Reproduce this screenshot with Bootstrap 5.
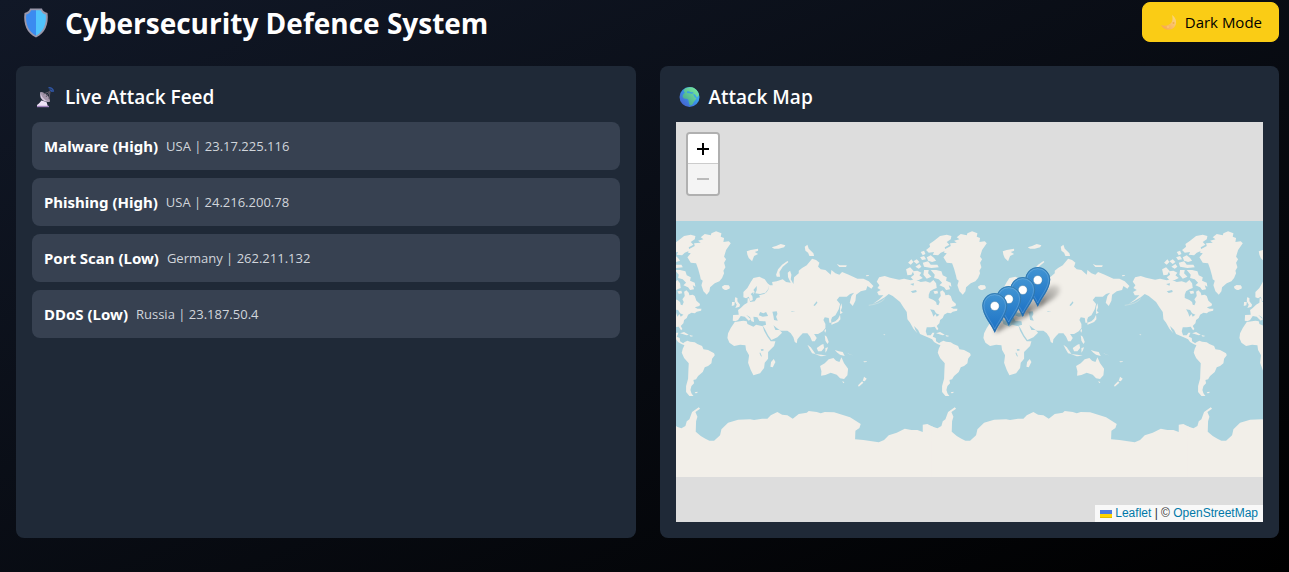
<!DOCTYPE html>
<html lang="en">
<head>
<meta charset="utf-8">
<meta name="viewport" content="width=device-width, initial-scale=1">
<title>Cybersecurity Defence System</title>
<link href="https://cdn.jsdelivr.net/npm/bootstrap@5.3.0/dist/css/bootstrap.min.css" rel="stylesheet">
<style>
  body {
    font-family: "Open Sans", "Noto Sans", sans-serif;
    color: #fff;
    background: linear-gradient(to bottom right, #111827, #000) no-repeat #000;
    min-height: 100vh;
    padding: 2px 10px 16px 16px;
  }
  .site-title { font-size: 28px; line-height: 40px; font-weight: 700; gap: 13px; padding: 2px 0 0 4px; height: 40px; }
  .btn-mode {
    --bs-btn-bg: #facc15; --bs-btn-color: #000; --bs-btn-border-color: #facc15;
    --bs-btn-hover-bg: #eab308; --bs-btn-hover-color: #000;
    font-size: 15px; line-height: 24px; border-radius: 8px; padding: 7px 16px; gap: 6px;
  }
  .panel { background: #1f2937; border-radius: 8px; padding: 16px; }
  .panel-title { font-size: 19px; line-height: 28px; font-weight: 600; margin-bottom: 12px; padding: 2px 0 0 3px; height: 28px; gap: 9px; }
  .feed-item { background: #374151; border-radius: 8px; padding: 12px; line-height: 24px; font-size: 15px; gap: 8px; }
  .feed-item + .feed-item { margin-top: 8px; }
  .feed-item strong { font-family: "Noto Sans", "Open Sans", sans-serif; }
  .feed-meta { font-size: 13px; color: #d1d5db; }
  .map-box { height: 400px; background: #ddd; }
  .map-zoom { top: 10px; left: 10px; border: 2px solid #b0b0b0; border-radius: 4px; }
  .map-zoom button { width: 30px; height: 30px; border: 0; padding: 0; background: #fff; color: #000; display: flex; align-items: center; justify-content: center; }
  .map-zoom button:first-child { border-bottom: 1px solid #ccc; border-radius: 2px 2px 0 0; }
  .map-zoom button:disabled { background: #f4f4f4; color: #bbb; border-radius: 0 0 2px 2px; }
  .map-credit { right: 0; bottom: 0; background: rgba(255,255,255,.8); color: #333; font: 12px/17px "Liberation Sans", Arial, sans-serif; padding: 0 5px; }
  .map-credit a { color: #0078a8; text-decoration: none; }
</style>
</head>
<body>
<header class="d-flex justify-content-between align-items-center mb-4">
  <h1 class="site-title d-flex align-items-center mb-0">
    <svg width="32" height="32" viewBox="0 0 32 32" aria-hidden="true">
      <path d="M10 1.500h12c.3 2 2.500 4 5.500 4.500C29 17 25 26.500 16 30.500 7 26.500 3 17 4.500 6 7.500 5.500 9.700 3.500 10 1.500z" fill="#9a97aa"/>
      <path d="M16 3.200h-4.800C10.500 5 8.700 7 6.200 7.500 5.300 17 8.500 24.800 16 28.700z" fill="#3b8bf0"/>
      <path d="M16 3.200h4.800C21.500 5 23.300 7 25.800 7.500 26.700 17 23.500 24.800 16 28.700z" fill="#50c4fd"/>
    </svg>
    <span>Cybersecurity Defence System</span>
  </h1>
  <button type="button" class="btn btn-mode d-flex align-items-center">
    <svg width="20" height="20" viewBox="0 0 20 20" aria-hidden="true">
      <defs><linearGradient id="moonFill" x1="0" y1="1" x2="1" y2="0"><stop offset="0" stop-color="#f7a04c"/><stop offset="1" stop-color="#fbdc82"/></linearGradient></defs>
      <path d="M13 3c4.500 3 5.500 9 2 12.500-3.800 3.700-10.500 2.800-13-2.500 4 1.500 8.500.5 10.500-2.500 1.300-2.300 1.300-5 .5-7.500z" fill="url(#moonFill)"/>
      <circle cx="14.500" cy="11" r="1" fill="#f0ad4a"/><circle cx="9" cy="15" r="1" fill="#fbc96d"/>
    </svg>
    <span>Dark Mode</span>
  </button>
</header>

<main class="row g-4">
  <section class="col-md-6">
    <div class="panel h-100">
      <h2 class="panel-title d-flex align-items-center">
        <svg width="21" height="22" viewBox="0 0 21 22" aria-hidden="true">
          <path d="M2 20.500v-1.500c2-1 3-3 4.500-4.500l5 1.500 1.500 4.500z" fill="#efe3f7"/>
          <path d="M2 19.800h12v1.400H2z" fill="#a184bd"/>
          <path d="M5.500 6c-1.500 6 2.500 11 9.500 9.500z" fill="#d8c8df"/>
          <path d="M5.500 6c4-.5 10 5 9.500 9.500-4 0-9-4-9.500-9.500z" fill="#a596ab"/>
          <path d="M8.500 8 15 5.500 14 13M15 5.500 11 11" fill="none" stroke="#625b69"/>
          <path d="M13.500 1.800c2.500-.5 4.800 1 5 4M14.500 4c1.500-.2 2.500.600 2.500 2" fill="none" stroke="#2f55a4" stroke-width="1.400"/>
        </svg>
        <span>Live Attack Feed</span>
      </h2>
      <ul class="list-unstyled mb-0">
        <li class="feed-item d-flex align-items-center"><strong>Malware (High)</strong><span class="feed-meta">USA | 23.17.225.116</span></li>
        <li class="feed-item d-flex align-items-center"><strong>Phishing (High)</strong><span class="feed-meta">USA | 24.216.200.78</span></li>
        <li class="feed-item d-flex align-items-center"><strong>Port Scan (Low)</strong><span class="feed-meta">Germany | 262.211.132</span></li>
        <li class="feed-item d-flex align-items-center"><strong>DDoS (Low)</strong><span class="feed-meta">Russia | 23.187.50.4</span></li>
      </ul>
    </div>
  </section>

  <section class="col-md-6">
    <div class="panel h-100">
      <h2 class="panel-title d-flex align-items-center">
        <svg width="21" height="22" viewBox="0 0 21 22" aria-hidden="true">
          <defs><linearGradient id="seaFill" x1="0" y1="1" x2="1" y2="0"><stop offset="0" stop-color="#4a55c8"/><stop offset=".5" stop-color="#3a8fe8"/><stop offset="1" stop-color="#3fc4fb"/></linearGradient>
          <linearGradient id="landFill" x1="0" y1="1" x2="1" y2="0"><stop offset="0" stop-color="#3f9b8c"/><stop offset="1" stop-color="#7df0a0"/></linearGradient></defs>
          <circle cx="10.500" cy="11" r="10" fill="url(#seaFill)"/>
          <path d="M5 3.500C8 .8 13 .5 16 2.700c2 1.400 3.600 4 4 6.300l-2 2.500-2-3-2-.5 2 3.500 1.500.5c-.5 2-2.500 3-3 4.500-.5 2-2 3-3.500 3-1-1.500-1-3-1.500-4.500 0-1.500-1-2-2-2.200-2 .2-3.500-.8-4-2.300C3.500 8.500 5 7.500 6 6.500 5 6 4.500 5 5 3.500z" fill="url(#landFill)"/>
          <path d="M8 5.500c1.500-.5 2.500 0 3.500.5 1 .4 2 0 3 .5l-.5 1c-2 .5-4-.5-6-.5z" fill="#3a9fe0"/>
        </svg>
        <span>Attack Map</span>
      </h2>
      <div class="map-box position-relative overflow-hidden">
        <svg class="d-block" width="100%" height="400" role="img" aria-label="World map with four attack locations">
          <defs>
            <linearGradient id="pinFill" x1="0" y1="0" x2="0" y2="1"><stop offset="0" stop-color="#4295d3"/><stop offset="1" stop-color="#1a6fc4"/></linearGradient>
            <linearGradient id="shadeFill" x1="0" y1="1" x2="1" y2="0"><stop offset="0" stop-color="#000" stop-opacity=".5"/><stop offset="1" stop-color="#000" stop-opacity=".08"/></linearGradient>
            <filter id="soften" x="-40%" y="-40%" width="180%" height="180%"><feGaussianBlur stdDeviation="2"/></filter>
            <g id="pin">
              <path d="M0 0C-3-8-12.500-17-12.500-27.500a12.500 12.500 0 0 1 25 0C12.500-17 3-8 0 0z" fill="url(#pinFill)"/>
              <path d="M0-1.500C-3-9-12-18-12-27.500a12 12 0 0 1 24 0C12-18 3-9 0-1.500z" fill="none" stroke="#2e6c97" stroke-opacity=".6"/>
              <path d="M0-4C-3-11-10.800-19-10.800-27.500a10.800 10.800 0 0 1 21.600 0C10.800-19 3-11 0-4z" fill="none" stroke="#fff" stroke-opacity=".15"/>
              <circle cy="-27" r="4.500" fill="#fff" stroke="#2e6c97" stroke-opacity=".4"/>
            </g>
            <path id="pinShade" d="M0 0C2-7 5-15 11-20c6-4 13-2 11 4C21-10 9-4 0 0z" fill="url(#shadeFill)" filter="url(#soften)"/>
            <g id="americas">
              <path d="M18 185 25 172 42 168 58 173 85 179 100 176 120 181 132 178 150 186 165 184 178 188 188 180 196 190 198 204 188 208 178 214 174 224 174 234 188 240 196 246 198 254 203 256 207 246 203 238 210 228 208 215 215 211 222 218 224 226 234 224 240 228 245 242 256 252 254 258 240 262 248 266 260 266 259 272 246 275 240 280 230 278 220 284 216 294 208 300 206 310 198 318 203 327 199 331 192 320 180 322 168 322 165 334 169 346 180 346 185 338 191 338 186 350 195 354 196 364 205 370 210 366 218 362 226 365 240 367 248 372 262 378 266 388 280 390 298 400 300 406 292 416 290 430 280 438 270 442 264 456 250 468 244 478 236 480 238 490 230 498 227 510 230 520 236 528 224 528 214 516 214 498 220 476 221 450 222 430 208 414 201 398 204 386 209 376 200 372 190 366 184 358 176 354 162 348 148 342 142 330 130 318 134 330 140 340 128 326 118 308 110 298 108 276 98 262 88 246 76 236 66 228 54 222 42 232 22 244 6 252 26 238 38 226 24 226 19 216 30 210 20 204 26 196z"/>
              <path d="M106 148 118 142 128 152 122 164 110 166zM120 172 130 164 126 154 140 152 152 158 146 166 156 174 144 180 128 180zM112 128 122 118 128 126 120 134zM128 124 138 118 146 126 138 132zM134 140 146 132 152 140 144 146zM150 96 160 92 164 102 156 106zM148 112 160 108 166 118 154 120zM156 128 172 124 180 134 200 134 204 142 182 144 160 140zM168 112 180 106 190 114 196 122 184 126 172 122zM166 90 178 80 176 72 190 62 208 48 228 44 242 48 240 58 228 66 236 74 222 82 224 92 210 98 202 106 186 104 190 96 174 98zM160 150 174 150 172 160 182 170 168 176 158 164zM180 150 196 150 212 154 216 166 228 172 226 182 240 188 242 200 234 196 238 208 226 210 220 202 206 196 214 188 204 178 190 174 192 164zM188 214 200 212 202 220 192 222z"/>
              <path d="M240 78 222 88 220 98 228 100 218 112 228 128 244 130 250 146 256 168 258 178 264 182 260 196 266 214 276 224 284 214 286 202 300 190 314 184 322 174 328 160 326 152 332 142 328 128 334 118 328 110 334 90 348 70 342 64 326 66 328 54 318 50 320 40 304 34 290 40 288 46 270 42 258 52 266 58 250 62 258 68 238 70z"/>
              <path d="M322 200 328 196 342 196 345 204 334 210 326 207zM196 340 208 336 222 344 216 346zM224 345 236 348 228 350zM240 517 248 515 248 519 242 520z"/>
              <path d="M178 268 190 270 196 280 206 284 198 290 194 282 188 290 184 278z" fill="#aad3df"/>
              <path d="M120 214 136 210 138 216 126 219zM118 192 130 190 128 197z" fill="#aad3df"/>
            </g>
            <g id="worldLand" fill="#f2efe9">
              <use href="#americas" x="582"/>
              <!-- Europe and Asia -->
              <path d="M168 302 169 285 186 284 184 270 192 264 202 254 212 248 213 234 218 236 220 246 234 244 240 234 250 232 247 226 262 222 270 216 276 206 272 190 280 196 288 196 286 186 300 184 318 178 328 186 342 188 334 172 333 158 340 152 344 164 342 178 350 192 352 172 366 160 366 152 376 144 390 136 398 126 406 116 418 120 428 128 424 140 432 148 446 150 462 164 464 150 476 160 488 164 496 156 516 164 542 176 560 176 576 184 590 198 584 206 572 198 568 210 552 214 538 224 536 242 528 258 519 248 524 228 532 218 520 222 510 230 488 230 480 240 490 252 486 268 476 286 466 292 463 300 464 308 458 308 456 294 444 292 440 300 446 312 446 324 438 334 424 342 412 342 420 354 414 364 406 364 400 350 392 340 378 340 370 348 362 358 360 370 354 366 350 352 342 340 332 332 312 332 300 324 290 316 296 330 308 330 316 338 302 352 284 360 274 346 264 326 258 317 268 314 266 304 248 303 242 292 230 290 232 306 224 304 220 292 208 284 222 298 216 302 204 290 192 288 184 300 176 304z"/>
              <path d="M200 216 200 232 208 235 216 230 221 244 228 240 227 226 234 216 230 210 240 198 240 210 236 220 250 222 266 218 276 205 274 192 264 178 248 170 230 174 222 186 212 204z"/>
              <!-- Africa and Madagascar -->
              <path d="M174 306 200 302 210 304 212 312 230 320 238 314 258 319 262 332 272 350 282 364 296 364 292 378 274 396 274 416 264 428 262 444 250 460 230 466 222 450 214 428 217 406 208 390 206 376 190 374 172 378 158 368 152 354 154 340 162 324zM291 417 296 426 288 442 281 440 283 426z"/>
              <!-- Northern islands, Britain and Iceland -->
              <path d="M175 232 182 234 182 244 190 254 188 260 176 264 180 254 174 244zM166 246 174 246 173 256 165 258zM136 200 144 196 158 198 158 206 146 210 138 206zM210 94 222 90 244 86 244 92 234 96 244 102 232 108 226 124 216 114 212 104zM298 164 304 148 316 134 332 123 335 126 318 140 308 156 310 170 300 170zM285 82 298 78 312 72 326 76 322 82 306 86 292 86zM384 80 392 74 396 86 410 100 412 108 398 108 394 98 386 92zM480 132 490 136 510 136 508 141 488 141zM568 166 576 165 576 168 568 169z"/>
              <!-- East Asian and Pacific islands -->
              <path d="M490 262 494 250 496 262 492 272 498 278 490 282zM490 284 491 298 484 306 470 312 464 314 464 308 476 304 484 296zM446 326 448 332 445 338 443 332zM444 346 450 350 456 366 452 372 446 362zM392 374 402 382 412 396 416 402 406 400 398 386zM414 402 434 404 450 407 432 409zM420 384 434 374 440 372 442 384 434 394 424 394zM446 384 454 382 450 392 446 398zM474 390 486 394 498 396 504 408 490 404 482 398zM512 400 528 406 516 402zM430 438 444 430 456 418 470 414 478 422 488 426 494 412 502 430 514 446 512 466 502 477 490 475 480 464 462 458 446 465 433 467 434 454zM496 484 503 486 500 490zM562 470 570 476 564 484 558 482zM556 484 560 488 546 500 544 496zM560 424 570 424 570 426 562 427zM620 342 626 344 622 346z"/>
              <path d="M576 256Q610 252 624 236" fill="none" stroke="#d0e2e3" stroke-width="2"/>
              <!-- Antarctica -->
              <path d="M-4 618 0 620 14 625 26 618 30 604 38 598 46 576 66 562 70 566 56 576 62 590 58 604 57 635 72 648 86 656 98 662 112 662 130 646 134 628 154 608 184 599 220 598 232 600 256 596 272 596 282 586 302 576 316 584 332 586 348 596 366 582 390 578 396 573 420 576 432 580 444 576 472 577 496 584 520 592 552 612 548 624 536 632 535 658 560 660 606 667 622 660 636 646 660 638 684 626 704 630 722 630 738 636 738 614 752 612 768 620 772 622V771H-4z"/>
              <!-- Inland seas and lakes -->
              <path d="M246 286 250 276 260 280 268 276 274 288 258 290zM287 275 300 274 302 282 298 290 303 302 292 300 290 288zM410 256 420 244 422 248 414 258zM252 388 260 387 260 392 253 392zM248 398 251 398 256 410 252 408zM222 222 230 216 228 230zM344 273 356 274 344 275z" fill="#aad3df"/>
            </g>
          </defs>
          <svg x="50%" overflow="visible">
            <rect x="-3000" y="99" width="6000" height="256" fill="#aad3df"/>
            <g transform="translate(-293 98) scale(.333333)" stroke-linejoin="round">
              <use href="#worldLand" x="-1536"/>
              <use href="#worldLand" x="-768"/>
              <use href="#worldLand"/>
              <use href="#worldLand" x="768"/>
              <use href="#worldLand" x="1536"/>
              <use href="#worldLand" x="2304"/>
            </g>
            <use href="#pinShade" x="68" y="185"/><use href="#pinShade" x="53" y="195"/><use href="#pinShade" x="39" y="204"/><use href="#pinShade" x="25" y="211"/>
            <use href="#pin" x="68" y="185"/><use href="#pin" x="53" y="195"/><use href="#pin" x="39" y="204"/><use href="#pin" x="25" y="211"/>
          </svg>
        </svg>
        <div class="map-zoom position-absolute">
          <button type="button" aria-label="Zoom in"><svg width="14" height="14" viewBox="0 0 14 14"><path d="M7 1v12M1 7h12" stroke="currentColor" stroke-width="2"/></svg></button>
          <button type="button" aria-label="Zoom out" disabled><svg width="14" height="14" viewBox="0 0 14 14"><path d="M1 7h12" stroke="currentColor" stroke-width="2"/></svg></button>
        </div>
        <div class="map-credit position-absolute">
          <a href="#"><svg width="12" height="8" viewBox="0 0 12 8" aria-hidden="true"><path fill="#4c7be1" d="M0 0h12v4H0z"/><path fill="#ffd500" d="M0 4h12v3H0z"/><path fill="#e0bc00" d="M0 7h12v1H0z"/></svg> Leaflet</a> | © <a href="#">OpenStreetMap</a>
        </div>
      </div>
    </div>
  </section>
</main>
<script src="https://cdn.jsdelivr.net/npm/bootstrap@5.3.0/dist/js/bootstrap.bundle.min.js"></script>
</body>
</html>
